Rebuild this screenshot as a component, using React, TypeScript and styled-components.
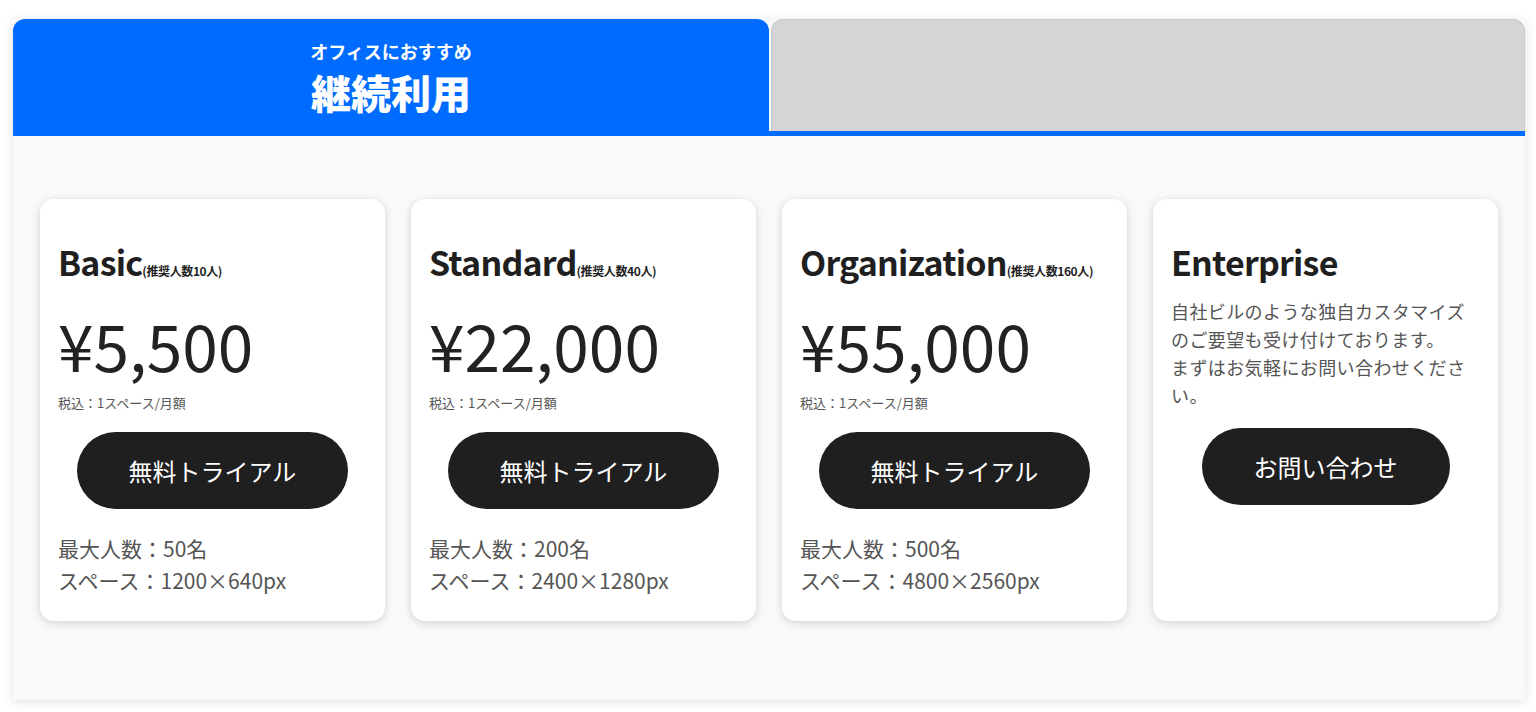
import styled, { createGlobalStyle } from "styled-components";

const GlobalStyle = createGlobalStyle`
  body {
    margin: 0;
    background: #ffffff;
    font-family: "Noto Sans CJK JP", "Noto Sans", sans-serif;
  }
`;

type Plan = {
  name: string;
  note: string;
  price: string;
  members: string;
  space: string;
};

const plans: Plan[] = [
  { name: "Basic", note: "(推奨人数10人)", price: "¥5,500", members: "50名", space: "1200×640px" },
  { name: "Standard", note: "(推奨人数40人)", price: "¥22,000", members: "200名", space: "2400×1280px" },
  { name: "Organization", note: "(推奨人数160人)", price: "¥55,000", members: "500名", space: "4800×2560px" },
];

const App = () => {
  return (
    <>
      <GlobalStyle />
      <Page>
        <Panel>
          <Tabs>
            <Tab $active>
              <TabSub>オフィスにおすすめ</TabSub>
              <TabTitle>継続利用</TabTitle>
            </Tab>
            <Tab />
          </Tabs>

          <CardGrid>
            {plans.map((p) => (
              <Card key={p.name}>
                <PlanName>
                  {p.name}
                  <PlanNote>{p.note}</PlanNote>
                </PlanName>
                <Price>{p.price}</Price>
                <TaxNote>税込：1スペース/月額</TaxNote>
                <ButtonRow>
                  <PillButton>無料トライアル</PillButton>
                </ButtonRow>
                <Features>
                  <li>最大人数：{p.members}</li>
                  <li>スペース：{p.space}</li>
                </Features>
              </Card>
            ))}

            <Card>
              <PlanName>Enterprise</PlanName>
              <Description>
                自社ビルのような独自カスタマイズのご要望も受け付けております。
                <br />
                まずはお気軽にお問い合わせください。
              </Description>
              <ButtonRow>
                <PillButton>お問い合わせ</PillButton>
              </ButtonRow>
            </Card>
          </CardGrid>
        </Panel>
      </Page>
    </>
  );
};

export default App;

const Page = styled.div`
  padding: 19px 11px 12px 13px;
`;

const Panel = styled.div`
  height: 681px;
  background: #f8f9fa;
  box-shadow: 0 2px 10px rgba(0, 0, 0, 0.12);
  display: flex;
  flex-direction: column;
`;

const Tabs = styled.div`
  display: flex;
  gap: 2px;
  border-bottom: 5px solid #006cff;
  background: #f8f9fa;
`;

const Tab = styled.div<{ $active?: boolean }>`
  flex: ${(p) => (p.$active ? "0 0 756px" : "1")};
  height: 112px;
  box-sizing: border-box;
  border-radius: 12px 12px 0 0;
  display: flex;
  flex-direction: column;
  align-items: center;
  padding-top: 20px;
  color: #ffffff;
  background: ${(p) => (p.$active ? "#006cff" : "#d5d5d5")};
  border: ${(p) => (p.$active ? "none" : "1px solid #c9c9c9")};
  border-bottom: none;
`;

const TabSub = styled.div`
  font-size: 18px;
  font-weight: 700;
  line-height: 25px;
`;

const TabTitle = styled.div`
  font-size: 40px;
  font-weight: 900;
  line-height: 49px;
  margin-top: 4px;
`;

const CardGrid = styled.div`
  display: grid;
  grid-template-columns: repeat(4, 345px);
  gap: 26px;
  padding: 63px 26px 0 27px;
  align-items: start;
`;

const Card = styled.div`
  height: 422px;
  box-sizing: border-box;
  background: #ffffff;
  border-radius: 14px;
  box-shadow: 0 2px 8px rgba(0, 0, 0, 0.16);
  padding: 38px 18px 30px;
  color: #222222;
`;

const PlanName = styled.h2`
  margin: 0;
  font-size: 34px;
  font-weight: 700;
  line-height: 50px;
  letter-spacing: -0.8px;
  white-space: nowrap;
  color: #1f1f1f;
`;

const PlanNote = styled.span`
  font-size: 12px;
  letter-spacing: -0.4px;
`;

const Price = styled.div`
  margin-top: 8px;
  font-size: 64px;
  font-weight: 400;
  line-height: 80px;
  color: #222222;
`;

const TaxNote = styled.div`
  margin-top: 9px;
  font-size: 13px;
  line-height: 20px;
  color: #555555;
`;

const ButtonRow = styled.div`
  display: flex;
  justify-content: center;
  margin-top: 19px;
`;

const PillButton = styled.button`
  height: 77px;
  padding: 0 52px;
  border: none;
  border-radius: 38.5px;
  background: #1f1f1f;
  color: #ffffff;
  font-family: "Noto Sans CJK JP", "Noto Sans", sans-serif;
  font-size: 24px;
  font-weight: 400;
  cursor: pointer;
`;

const Features = styled.ul`
  list-style: none;
  margin: 23px 0 0;
  padding: 0;
  font-size: 21px;
  line-height: 32px;
  color: #555555;
`;

const Description = styled.p`
  margin: 10px 0 0;
  font-size: 18px;
  line-height: 28px;
  letter-spacing: 0.4px;
  color: #555555;
`;
